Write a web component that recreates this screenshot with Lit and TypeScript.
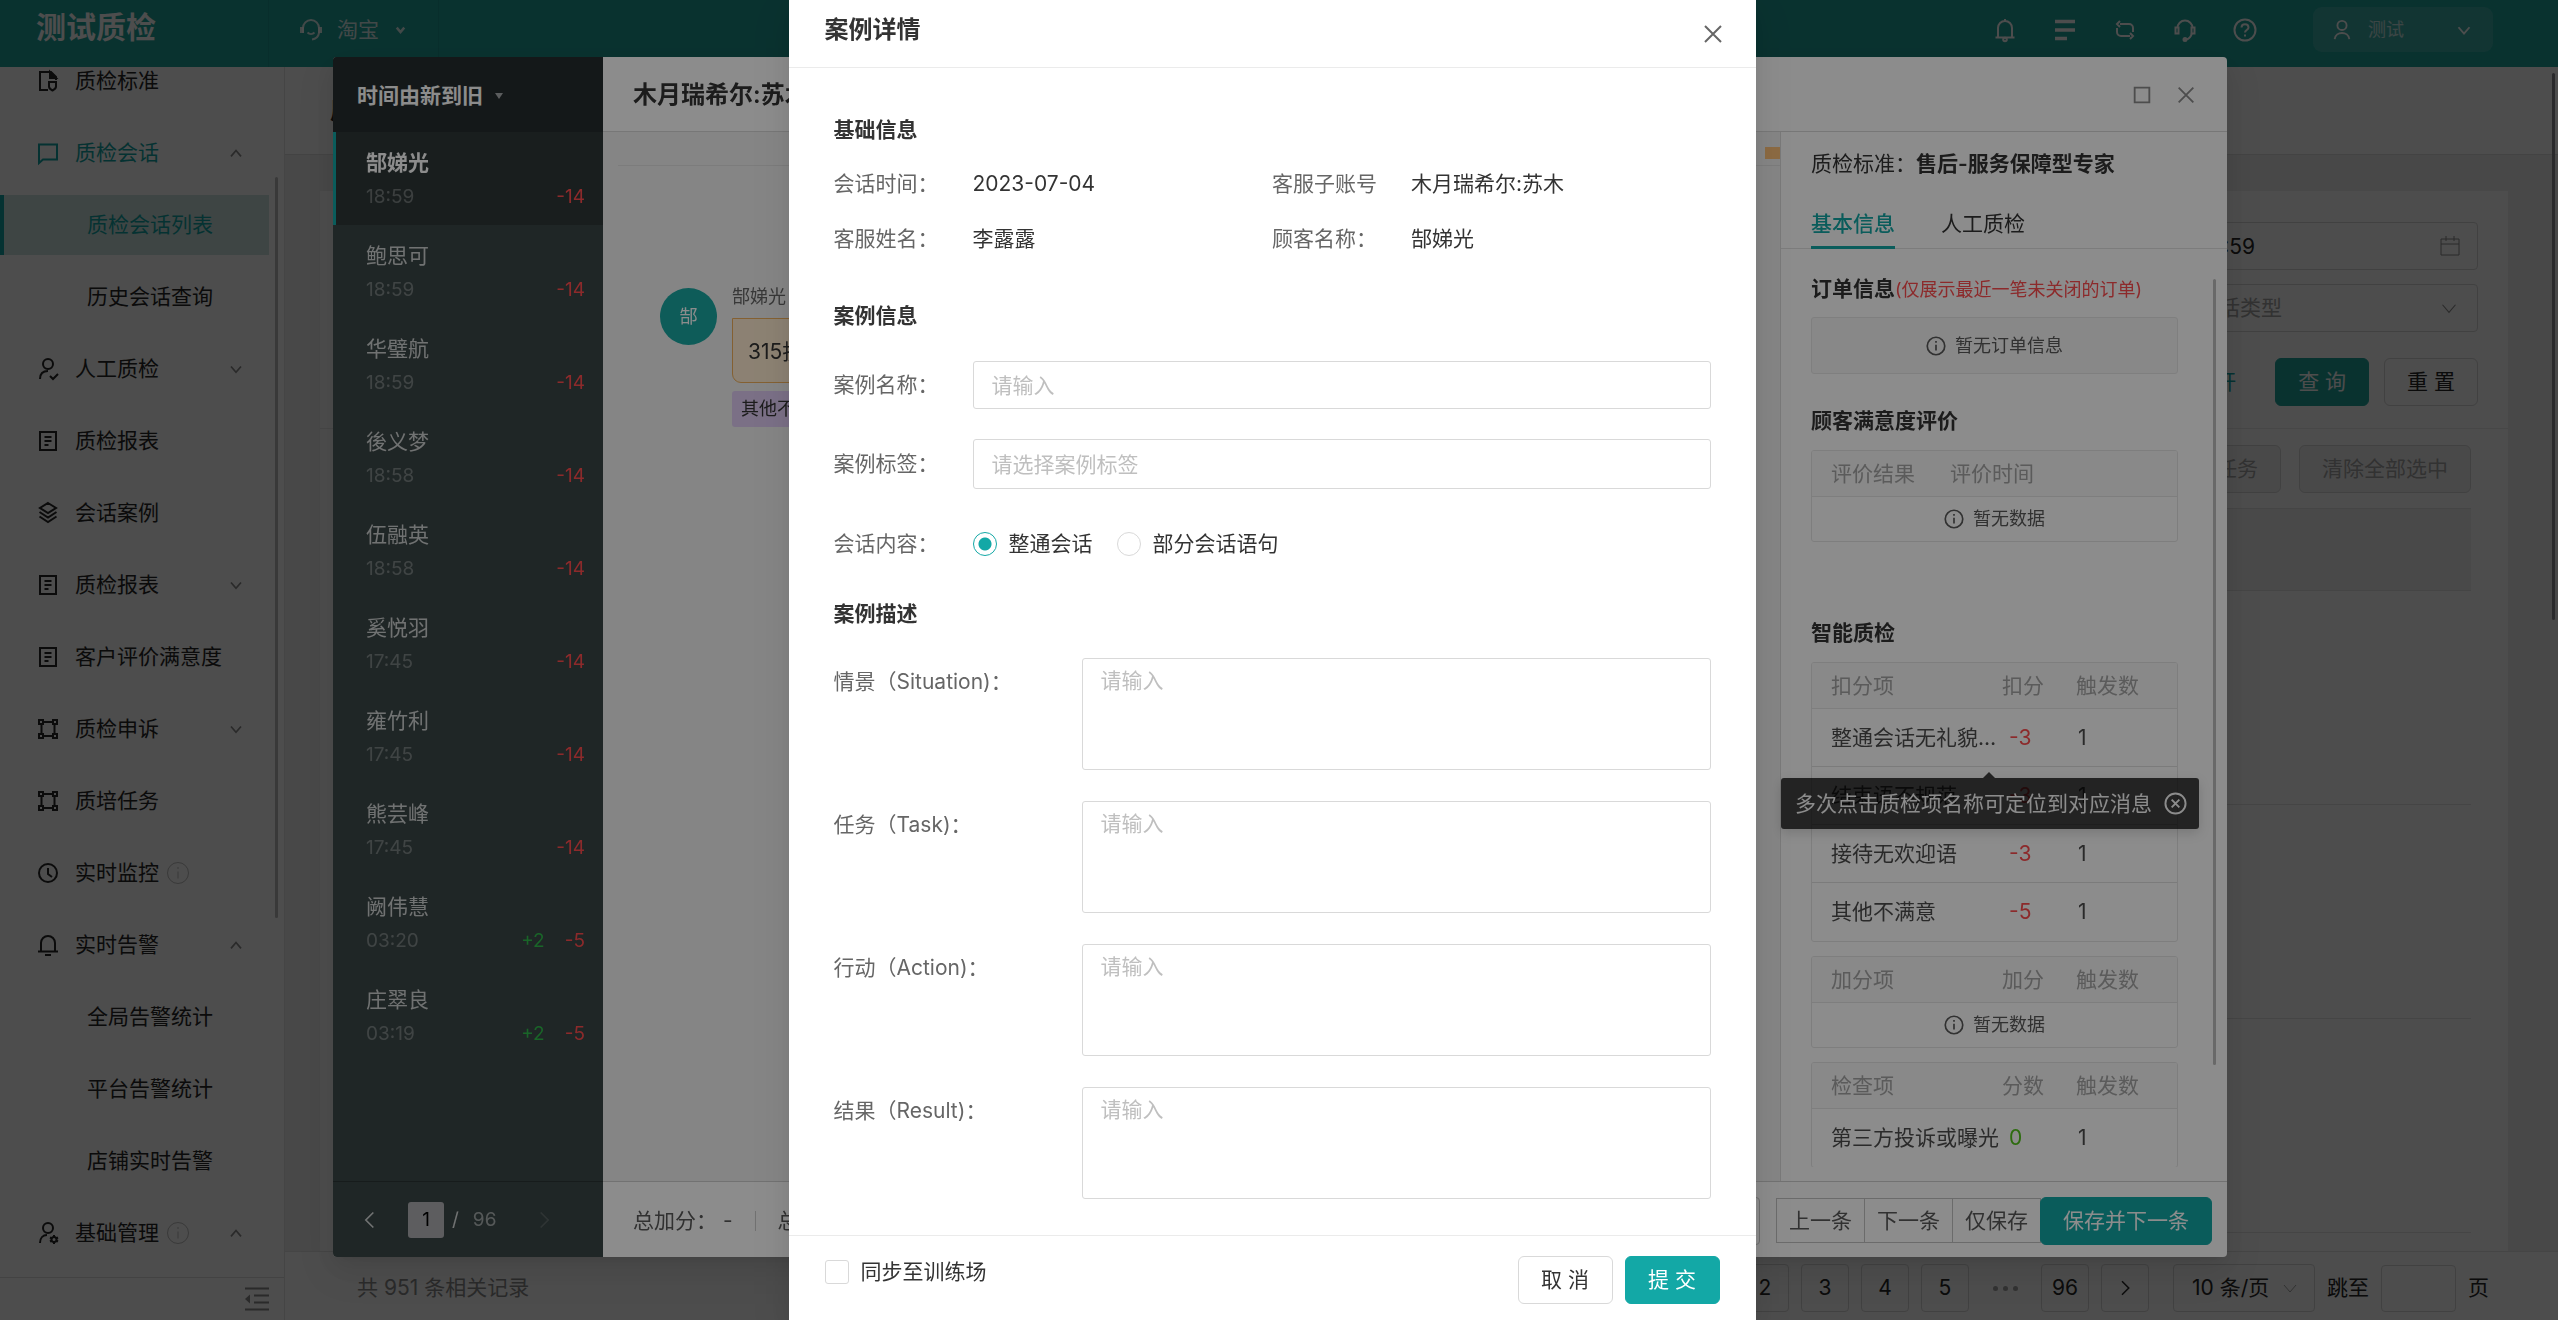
import { LitElement, html, css, svg, nothing } from "lit";
import { customElement } from "lit/decorators.js";
import { classMap } from "lit/directives/class-map.js";

const shapes: Record<string, unknown> = {
  file: svg`<path d="M20 11V8l-5-5H4v18h8"/><path d="M14 3v6h6z" fill="currentColor"/><path d="M13 13h7v4.500c0 2-1.500 3-3.500 4-2-1-3.500-2-3.500-4z"/>`,
  chat: svg`<path d="M3 3.500h18v15H7l-4 3.500z"/>`,
  userCheck: svg`<ellipse cx="12" cy="7" rx="5" ry="5"/><path d="M4 22c0-5 3-8 8-8M14 19l3 3 5-5"/>`,
  userGear: svg`<ellipse cx="12" cy="7" rx="5" ry="5"/><path d="M4 22c0-5 3-8 7-8"/><circle cx="18" cy="18.500" r="2.500"/><path d="M18 14v2M18 21v2M14 16.500l2 1M20 19.500l2 1M14 20.500l2-1M20 17.500l2-1"/>`,
  doc: svg`<path d="M4 3h16v18H4zM8.500 8h7M8.500 12h7M8.500 16h4"/>`,
  layers: svg`<path d="M12 2l8 5-8 5-8-5zM3.500 11l8.500 5.500 8.500-5.500M3.500 15.500L12 21l8.500-5.500"/>`,
  nodes: svg`<path d="M5.500 6.500v11M18.500 6.500v11M6.500 5h11M6.500 19h11"/><path d="M3 3h4v4H3zM17 3h4v4h-4zM3 17h4v4H3zM17 17h4v4h-4z"/>`,
  clock: svg`<circle cx="12" cy="12" r="9"/><path d="M12 7v6l4 3"/>`,
  bell: svg`<path d="M5 18v-8a7 7 0 0 1 14 0v8M2 18.500h20M9 22h6"/>`,
  info: svg`<circle cx="12" cy="12" r="10.500"/><path d="M12 10.500v7M12 6v2"/>`,
  up: svg`<path d="M6 16l6-7 6 7"/>`,
  down: svg`<path d="M6 9l6 7 6-7"/>`,
  left: svg`<path d="M16 3l-9 9 9 9"/>`,
  right: svg`<path d="M8 3l9 9-9 9"/>`,
  close: svg`<path d="M4 4l16 16M20 4L4 20"/>`,
  square: svg`<path d="M4 4h16v16H4z"/>`,
  fold: svg`<path d="M0 1.500h24M9 8.500h15M9 15.500h15M0 22.500h24"/><path d="M5 7.500v9L0 12z" fill="currentColor" stroke="none"/>`,
  headset: svg`<path d="M4 15V10a8 8 0 0 1 16 0v5a8 8 0 0 1-7 6.500"/><path d="M3 9v6M21 9v6" stroke-width="4"/><path d="M8.500 14.500c2 2 5 2 7 0"/>`,
  headsetThin: svg`<path d="M4.500 10a7.500 7.500 0 0 1 15 0M19 15c-1 4-3 6-6 6.500"/><path d="M2.500 9.500h3v6h-3zM18.500 9.500h3v6h-3z"/><circle cx="12" cy="21.500" r="1.500" fill="currentColor"/>`,
  bellThin: svg`<path d="M5 19V10a7 7 0 0 1 14 0v9M2.500 19.500h19M12 1v2"/><circle cx="12" cy="21.500" r="1.800"/>`,
  bars: svg`<path d="M2 3.500h20M2 12h20M2 20.500h12" stroke-width="3.500"/>`,
  loop: svg`<path d="M7 6h9a4 4 0 0 1 4 4v4M7 3L4 6l3 3M17 18H8a4 4 0 0 1-4-4v-4M17 15l3 3-3 3"/>`,
  help: svg`<circle cx="12" cy="12" r="10.500"/><path d="M8.500 9.500c0-4.500 7-4.500 7 0 0 2.500-3.500 2.500-3.500 5M12 16.500v2"/>`,
  user: svg`<circle cx="12" cy="7" r="5"/><path d="M4 22c1-9 15-9 16 0"/>`,
  calendar: svg`<path d="M3 5h18v16H3zM3 10h18M8 2v5M16 2v5"/>`,
  closeRound: svg`<circle cx="12" cy="12" r="10.500"/><path d="M8 8l8 8M16 8l-8 8"/>`,
};

const icon = (name: string, size = 24, stroke = 2) => html`<svg
  width=${size}
  height=${size}
  viewBox="0 0 24 24"
  fill="none"
  stroke="currentColor"
  stroke-width=${stroke}
  aria-hidden="true"
>
  ${shapes[name]}
</svg>`;

const base = css`
  * {
    box-sizing: border-box;
  }
  svg {
    display: block;
    flex: none;
    overflow: visible;
  }
  button,
  input,
  select,
  textarea {
    font: inherit;
    color: inherit;
    margin: 0;
  }
  button {
    display: inline-flex;
    align-items: center;
    justify-content: center;
    border: none;
    background: none;
    padding: 0;
    white-space: nowrap;
    cursor: pointer;
  }
  a {
    color: inherit;
    text-decoration: none;
  }
  h1,
  h2,
  h3,
  p,
  ul,
  dl,
  dd {
    margin: 0;
    padding: 0;
    list-style: none;
  }
`;

interface NavItem {
  label: string;
  icon?: string;
  arrow?: "up" | "down";
  hint?: boolean;
  open?: boolean;
  active?: boolean;
}

const navItems: NavItem[] = [
  { label: "质检标准", icon: "file" },
  { label: "质检会话", icon: "chat", arrow: "up", open: true },
  { label: "质检会话列表", active: true },
  { label: "历史会话查询" },
  { label: "人工质检", icon: "userCheck", arrow: "down" },
  { label: "质检报表", icon: "doc" },
  { label: "会话案例", icon: "layers" },
  { label: "质检报表", icon: "doc", arrow: "down" },
  { label: "客户评价满意度", icon: "doc" },
  { label: "质检申诉", icon: "nodes", arrow: "down" },
  { label: "质培任务", icon: "nodes" },
  { label: "实时监控", icon: "clock", hint: true },
  { label: "实时告警", icon: "bell", arrow: "up" },
  { label: "全局告警统计" },
  { label: "平台告警统计" },
  { label: "店铺实时告警" },
  { label: "基础管理", icon: "userGear", arrow: "up", hint: true },
];

@customElement("side-nav")
export class SideNav extends LitElement {
  static styles = [
    base,
    css`
      :host {
        display: flex;
        flex-direction: column;
        position: relative;
        width: 285px;
        min-height: 0;
        background: #fff;
        border-right: 1px solid #e8e8e8;
      }
      .list {
        flex: 1;
        min-height: 0;
        overflow: hidden;
      }
      .items {
        display: flex;
        flex-direction: column;
        gap: 12px;
        margin-top: -16px;
      }
      .item {
        display: flex;
        align-items: center;
        height: 60px;
        width: 269px;
        padding: 0 23px 0 36px;
        color: #262626;
      }
      .item.sub {
        padding-left: 87px;
      }
      .item.open {
        color: #13a8a6;
      }
      .item.active {
        padding-left: 83px;
        border-left: 4px solid #13a8a6;
        background: #cfe6e3;
        color: #13a8a6;
      }
      .label {
        margin-left: 15px;
      }
      .sub .label {
        margin-left: 0;
      }
      .hint {
        margin-left: 7px;
        color: #bfbfbf;
      }
      .arrow {
        margin-left: auto;
        color: #8c8c8c;
      }
      .thumb {
        position: absolute;
        right: 6px;
        top: 110px;
        width: 3px;
        height: 741px;
        border-radius: 2px;
        background: #bfbfbf;
      }
      .foot {
        display: flex;
        justify-content: flex-end;
        align-items: center;
        height: 43px;
        padding-right: 15px;
        border-top: 1px solid #e0e0e0;
        color: #8c8c8c;
      }
    `,
  ];

  render() {
    return html`
      <nav class="list">
        <ul class="items">
          ${navItems.map(
            (n) => html`<li>
              <a href="#" class=${classMap({ item: true, sub: !n.icon, open: !!n.open, active: !!n.active })}>
                ${n.icon ? icon(n.icon) : nothing}
                <span class="label">${n.label}</span>
                ${n.hint ? html`<span class="hint">${icon("info", 24, 1)}</span>` : nothing}
                ${n.arrow ? html`<span class="arrow">${icon(n.arrow, 20, 2)}</span>` : nothing}
              </a>
            </li>`
          )}
        </ul>
      </nav>
      <div class="thumb"></div>
      <div class="foot"><button aria-label="收起菜单">${icon("fold")}</button></div>
    `;
  }
}

@customElement("top-bar")
export class TopBar extends LitElement {
  static styles = [
    base,
    css`
      :host {
        display: flex;
        height: 67px;
        background: #20a79f;
        color: #fff;
      }
      .brand {
        width: 269px;
        padding-left: 36px;
        border-right: 1px solid #1d9a93;
        font-size: 30px;
        line-height: 54px;
        font-weight: 600;
      }
      .platform {
        justify-content: flex-start;
        gap: 14px;
        width: 170px;
        height: 67px;
        padding: 0 0 8px 30px;
        border-right: 1px solid #1d9a93;
        color: rgba(255, 255, 255, 0.85);
      }
      .tools {
        display: flex;
        gap: 36px;
        margin-left: auto;
        height: 60px;
        align-items: center;
      }
      .user {
        display: flex;
        align-items: center;
        width: 180px;
        height: 45px;
        margin: 7px 65px 0 56px;
        padding: 0 18px;
        border-radius: 9px;
        background: rgba(255, 255, 255, 0.14);
        font-size: 18px;
      }
      .user span {
        margin: 0 auto 0 15px;
        opacity: 0.7;
      }
    `,
  ];

  render() {
    return html`
      <h1 class="brand">测试质检</h1>
      <button class="platform">${icon("headset")}<span>淘宝</span>${icon("down", 15, 4)}</button>
      <div class="tools">
        <button aria-label="通知">${icon("bellThin")}</button>
        <button aria-label="列表">${icon("bars")}</button>
        <button aria-label="切换">${icon("loop")}</button>
        <button aria-label="客服">${icon("headsetThin")}</button>
        <button aria-label="帮助">${icon("help")}</button>
      </div>
      <button class="user">${icon("user", 22, 2)}<span>测试</span>${icon("down", 22, 2)}</button>
    `;
  }
}

@customElement("session-page")
export class SessionPage extends LitElement {
  static styles = [
    base,
    css`
      :host {
        display: flex;
        flex-direction: column;
        position: relative;
        flex: 1;
        min-width: 0;
        background: #f0f0f0;
        color: #262626;
      }
      .title {
        height: 88px;
        padding-left: 45px;
        background: #fff;
        border-bottom: 1px solid #e0e0e0;
        font-size: 24px;
        line-height: 88px;
        font-weight: 600;
      }
      .card {
        display: flex;
        flex-direction: column;
        flex: 1;
        min-height: 0;
        margin: 36px 50px 0 35px;
        background: #fff;
      }
      .filters {
        display: flex;
        flex-direction: column;
        align-items: flex-end;
        gap: 14px;
        padding: 31px 30px 22px;
        border-bottom: 1px solid #ebebeb;
      }
      .field {
        display: flex;
        align-items: center;
        position: relative;
      }
      .field svg {
        position: absolute;
        right: 16px;
        color: #8c8c8c;
      }
      .control {
        width: 400px;
        height: 48px;
        border: 1px solid #d9d9d9;
        border-radius: 4px;
        background: #fff;
        appearance: none;
      }
      .date {
        padding: 0 222px 0 18px;
        text-align: right;
      }
      .type {
        padding: 0 18px 0 56px;
        color: #a6a6a6;
      }
      .actions,
      .tools {
        display: flex;
        justify-content: flex-end;
        align-items: center;
        gap: 15px;
      }
      .actions {
        margin-top: 12px;
      }
      .more {
        margin-right: 24px;
        color: #13a8a6;
      }
      .btn {
        height: 48px;
        padding: 0 22px;
        border: 1px solid #d9d9d9;
        border-radius: 6px;
        background: #fff;
      }
      .btn.primary {
        border-color: #20a79f;
        background: #20a79f;
        color: #fff;
      }
      .btn.muted {
        background: #f5f5f5;
        color: #a6a6a6;
      }
      .tools {
        gap: 18px;
        padding: 16px 37px 15px;
      }
      .grid {
        margin: 0 37px;
      }
      .head {
        height: 83px;
        background: #f5f5f5;
        border-bottom: 1px solid #e5e5e5;
        border-top: 1px solid #e5e5e5;
      }
      .row {
        height: 214px;
        border-bottom: 1px solid #e5e5e5;
      }
      .foot {
        display: flex;
        align-items: center;
        gap: 12px;
        height: 69px;
        padding: 4px 69px 0 72px;
        border-top: 1px solid #e5e5e5;
        background: #fff;
      }
      .total {
        margin-right: auto;
        color: #8c8c8c;
      }
      .page {
        width: 48px;
        height: 48px;
        border: 1px solid #d9d9d9;
        border-radius: 4px;
      }
      .dots {
        display: flex;
        justify-content: center;
        gap: 5px;
        width: 48px;
      }
      .dots i {
        width: 5px;
        height: 5px;
        border-radius: 50%;
        background: #a6a6a6;
      }
      .size {
        position: relative;
        display: flex;
        align-items: center;
        margin-left: 12px;
      }
      .size select {
        width: 142px;
        height: 48px;
        padding: 0 18px;
        border: 1px solid #d9d9d9;
        border-radius: 4px;
        background: #fff;
        appearance: none;
      }
      .size svg {
        position: absolute;
        right: 13px;
        color: #a6a6a6;
      }
      .jump {
        display: flex;
        align-items: center;
        gap: 12px;
      }
      .jump input {
        width: 75px;
        height: 47px;
        border: 1px solid #d9d9d9;
        border-radius: 4px;
        background: #fff;
      }
      .thumb {
        position: absolute;
        right: 3px;
        top: 6px;
        width: 3px;
        height: 547px;
        border-radius: 2px;
        background: #8c8c94;
      }
    `,
  ];

  render() {
    return html`
      <h2 class="title">质检会话列表</h2>
      <section class="card">
        <form class="filters">
          <label class="field">
            <input class="control date" aria-label="会话时间" value="23:59:59" />${icon("calendar", 24, 1)}
          </label>
          <label class="field">
            <select class="control type" aria-label="会话类型">
              <option>请选择会话类型</option></select
            >${icon("down", 26, 1)}
          </label>
          <div class="actions">
            <a class="more" href="#">展开</a>
            <button type="button" class="btn primary">查 询</button>
            <button type="button" class="btn">重 置</button>
          </div>
        </form>
        <div class="tools">
          <button class="btn muted" disabled>添加至任务</button>
          <button class="btn muted" disabled>清除全部选中</button>
        </div>
        <div class="grid">
          <div class="head"></div>
          <div class="row"></div>
          <div class="row"></div>
          <div class="row"></div>
        </div>
      </section>
      <footer class="foot">
        <span class="total">共 951 条相关记录</span>
        <button class="page">2</button>
        <button class="page">3</button>
        <button class="page">4</button>
        <button class="page">5</button>
        <span class="dots"><i></i><i></i><i></i></span>
        <button class="page">96</button>
        <button class="page" aria-label="下一页">${icon("right", 18, 2)}</button>
        <span class="size">
          <select aria-label="每页条数">
            <option>10 条/页</option></select
          >${icon("down", 24, 1)}
        </span>
        <label class="jump">跳至<input /><span>页</span></label>
      </footer>
      <div class="thumb"></div>
    `;
  }
}

const sessions = [
  { name: "郜娣光", time: "18:59", minus: "-14" },
  { name: "鲍思可", time: "18:59", minus: "-14" },
  { name: "华璧航", time: "18:59", minus: "-14" },
  { name: "後义梦", time: "18:58", minus: "-14" },
  { name: "伍融英", time: "18:58", minus: "-14" },
  { name: "奚悦羽", time: "17:45", minus: "-14" },
  { name: "雍竹利", time: "17:45", minus: "-14" },
  { name: "熊芸峰", time: "17:45", minus: "-14" },
  { name: "阙伟慧", time: "03:20", plus: "+2", minus: "-5" },
  { name: "庄翠良", time: "03:19", plus: "+2", minus: "-5" },
];

interface ScoreTable {
  heads: string[];
  rows: string[][];
}

const scoreTables: ScoreTable[] = [
  {
    heads: ["扣分项", "扣分", "触发数"],
    rows: [
      ["整通会话无礼貌用语", "-3", "1"],
      ["结束语不规范", "-3", "1"],
      ["接待无欢迎语", "-3", "1"],
      ["其他不满意", "-5", "1"],
    ],
  },
  { heads: ["加分项", "加分", "触发数"], rows: [] },
  { heads: ["检查项", "分数", "触发数"], rows: [["第三方投诉或曝光", "0", "1"]] },
];

@customElement("review-dialog")
export class ReviewDialog extends LitElement {
  static styles = [
    base,
    css`
      :host {
        display: flex;
        flex: 1;
        min-width: 0;
        height: calc(100vh - 120px);
        border-radius: 4px;
        overflow: hidden;
        background: #fff;
        box-shadow: 0 4px 9px -6px rgba(0, 0, 0, 0.12), 0 9px 24px rgba(0, 0, 0, 0.08),
          0 14px 42px 12px rgba(0, 0, 0, 0.05);
        color: #333;
      }
      .side {
        display: flex;
        flex-direction: column;
        flex: none;
        width: 270px;
        background: #394545;
        color: rgba(255, 255, 255, 0.75);
      }
      .sort {
        justify-content: flex-start;
        gap: 12px;
        height: 75px;
        padding: 2px 0 0 24px;
        background: #252c2e;
        color: #fff;
        font-weight: 600;
      }
      .caret {
        border: 4px solid transparent;
        border-top: 6px solid rgba(255, 255, 255, 0.6);
        border-bottom: none;
      }
      .sessions {
        flex: 1;
        min-height: 0;
        overflow: hidden;
      }
      .session {
        display: grid;
        align-content: start;
        gap: 4px;
        height: 93px;
        padding: 16px 18px 0 30px;
        border-left: 3px solid transparent;
      }
      .session.on {
        border-left-color: #13a8a6;
        background: #2e3838;
      }
      .session.on .name {
        color: #fff;
        font-weight: 600;
      }
      .name {
        line-height: 30px;
      }
      .meta {
        display: flex;
        gap: 20px;
        font-size: 19px;
        line-height: 30px;
        color: rgba(255, 255, 255, 0.3);
      }
      .time {
        margin-right: auto;
      }
      .plus {
        color: #2fb84a;
      }
      .minus {
        color: #ff4d4f;
      }
      .pager {
        display: flex;
        align-items: center;
        height: 76px;
        padding: 0 49px 0 27px;
        border-top: 1px solid #2b3434;
        font-size: 19px;
      }
      .pager input {
        width: 36px;
        height: 36px;
        margin: 0 8px 0 28px;
        padding: 0;
        border: none;
        border-radius: 3px;
        background: #a9a9ad;
        color: #000;
        text-align: center;
      }
      .pager .count {
        margin: 0 auto 0 14px;
        color: rgba(255, 255, 255, 0.5);
      }
      .pager .off {
        opacity: 0.2;
      }
      .main {
        display: flex;
        flex-direction: column;
        flex: 1;
        min-width: 0;
      }
      .bar {
        display: flex;
        align-items: center;
        gap: 22px;
        height: 75px;
        padding: 2px 30px 0;
        border-bottom: 1px solid #d9d9d9;
      }
      .bar h2 {
        margin-right: auto;
        font-size: 24px;
        font-weight: 600;
      }
      .bar button {
        color: #8c8c8c;
      }
      .body {
        display: flex;
        flex: 1;
        min-height: 0;
      }
      .chat {
        flex: 1;
        min-width: 0;
        background: #f3f3f3;
      }
      .strip {
        display: flex;
        justify-content: flex-end;
        height: 34px;
        margin-left: 15px;
        padding-top: 15px;
        border-bottom: 1px solid #e2e2e2;
      }
      .flag {
        width: 15px;
        height: 12px;
        background: #ffc27a;
      }
      .message {
        display: flex;
        gap: 15px;
        padding: 122px 0 0 57px;
        font-size: 18px;
      }
      .avatar {
        display: flex;
        align-items: center;
        justify-content: center;
        width: 57px;
        height: 57px;
        border-radius: 50%;
        background: #1aa8a3;
        color: #fff;
      }
      .sender {
        line-height: 18px;
        color: #666;
      }
      .bubble {
        height: 65px;
        margin-top: 12px;
        padding: 0 15px;
        border: 1px solid #f0b05c;
        border-radius: 0 9px 9px 9px;
        background: #ffecd1;
        font-size: 21px;
        line-height: 65px;
        white-space: nowrap;
      }
      .tag {
        display: inline-block;
        height: 36px;
        margin-top: 8px;
        padding: 0 9px;
        border-radius: 3px;
        background: #e0ccf5;
        line-height: 36px;
        white-space: nowrap;
      }
      .panel {
        position: relative;
        display: flex;
        flex-direction: column;
        flex: none;
        width: 447px;
        border-left: 1px solid #dcdcdc;
      }
      .standard {
        height: 65px;
        padding-left: 30px;
        line-height: 63px;
      }
      .standard b {
        font-weight: 600;
      }
      .tabs {
        display: flex;
        gap: 46px;
        height: 52px;
        padding-left: 30px;
        border-bottom: 1px solid #e2e2e2;
      }
      .tab {
        height: 52px;
        padding-top: 4px;
        border-bottom: 3px solid transparent;
      }
      .tab.on {
        border-color: #13a8a6;
        color: #13a8a6;
        font-weight: 500;
      }
      .scroll {
        flex: 1;
        min-height: 0;
        margin: 0 49px 14px 30px;
        padding-top: 25px;
        overflow: hidden;
      }
      .scroll h3 {
        font-size: 21px;
        line-height: 30px;
        font-weight: 600;
        white-space: nowrap;
      }
      .note {
        font-size: 18px;
        font-weight: 400;
        color: #ff4d4f;
      }
      .empty {
        display: flex;
        align-items: center;
        justify-content: center;
        gap: 9px;
        font-size: 18px;
        color: #595959;
      }
      .order {
        height: 57px;
        margin: 12px 0 32px;
        border: 1px solid #e8e8e8;
        border-radius: 3px;
        background: #f7f7f7;
      }
      .box {
        margin-top: 15px;
        border: 1px solid #e5e5e5;
        border-radius: 3px;
        overflow: hidden;
      }
      .rating {
        margin-bottom: 76px;
      }
      .rating,
      h3 + .box {
        margin-top: 14px;
      }
      .box + .box {
        margin-top: 14px;
      }
      table {
        width: 100%;
        border-collapse: separate;
        border-spacing: 0;
        table-layout: fixed;
      }
      th {
        height: 46px;
        padding: 0;
        border-bottom: 1px solid #e5e5e5;
        background: #f9f9f9;
        color: #a6a6a6;
        font-weight: 400;
        text-align: left;
      }
      th:first-child,
      td:first-child {
        padding-left: 19px;
      }
      .c1 {
        width: 190px;
      }
      .c2 {
        width: 74px;
      }
      .r1 {
        width: 138px;
      }
      td {
        height: 58px;
        padding: 0 2px;
        border-bottom: 1px solid #e0e0e0;
        color: #4d4d4d;
        overflow: hidden;
        text-overflow: ellipsis;
        white-space: nowrap;
      }
      tr:last-child td {
        border-bottom: none;
      }
      td.score {
        padding-left: 7px;
      }
      td.none {
        height: 44px;
        padding: 0;
      }
      td.minus {
        color: #ff4d4f;
      }
      td.green {
        color: #52c41a;
      }
      .tip {
        position: absolute;
        left: 0;
        top: 646px;
        display: flex;
        align-items: center;
        gap: 12px;
        height: 51px;
        padding: 0 12px 0 14px;
        border-radius: 3px;
        background: rgba(0, 0, 0, 0.75);
        box-shadow: 0 4px 12px rgba(0, 0, 0, 0.15);
        color: #fff;
        white-space: nowrap;
      }
      .tip::before {
        content: "";
        position: absolute;
        left: 202px;
        top: -6px;
        border: 6px solid transparent;
        border-top: none;
        border-bottom-color: rgba(0, 0, 0, 0.75);
      }
      .thumb {
        position: absolute;
        right: 11px;
        top: 147px;
        width: 3px;
        height: 786px;
        border-radius: 2px;
        background: #bfbfbf;
      }
      .foot {
        display: flex;
        align-items: center;
        height: 76px;
        padding: 2px 15px 0 30px;
        border-top: 1px solid #d0d0d0;
        color: #595959;
      }
      .split {
        width: 1px;
        height: 20px;
        margin: 0 22px;
        background: #d0d0d0;
      }
      .nav {
        display: flex;
        align-items: center;
        margin-left: auto;
      }
      .nav button {
        height: 45px;
        padding: 0 12px;
        margin-right: -1px;
        border: 1px solid #c4c4c4;
      }
      .nav .prior {
        height: 48px;
        margin-right: 16px;
        border-radius: 4px;
      }
      .nav .save {
        height: 48px;
        margin: 0;
        padding: 0 22px;
        border-color: #13a8a6;
        border-radius: 6px;
        background: #13a8a6;
        color: #fff;
      }
    `,
  ];

  private empty(text: string) {
    return html`<div class="empty">${icon("info", 20, 2)}<span>${text}</span></div>`;
  }

  private scoreTable(t: ScoreTable) {
    const tone = (v: string) => (v.startsWith("-") ? "minus" : "green");
    return html`<div class="box">
      <table>
        <thead>
          <tr>
            <th class="c1">${t.heads[0]}</th>
            <th class="c2">${t.heads[1]}</th>
            <th>${t.heads[2]}</th>
          </tr>
        </thead>
        <tbody>
          ${t.rows.length
            ? t.rows.map(
                (r) => html`<tr>
                  <td>${r[0]}</td>
                  <td class="score ${tone(r[1])}">${r[1]}</td>
                  <td>${r[2]}</td>
                </tr>`
              )
            : html`<tr>
                <td class="none" colspan="3">${this.empty("暂无数据")}</td>
              </tr>`}
        </tbody>
      </table>
    </div>`;
  }

  render() {
    return html`
      <aside class="side">
        <button class="sort">时间由新到旧<i class="caret"></i></button>
        <ul class="sessions">
          ${sessions.map(
            (s, i) => html`<li class=${classMap({ session: true, on: i === 0 })}>
              <div class="name">${s.name}</div>
              <div class="meta">
                <span class="time">${s.time}</span>
                ${s.plus ? html`<span class="plus">${s.plus}</span>` : nothing}
                <span class="minus">${s.minus}</span>
              </div>
            </li>`
          )}
        </ul>
        <div class="pager">
          <button aria-label="上一页">${icon("left", 20, 2)}</button>
          <input aria-label="页码" value="1" /><span>/</span><span class="count">96</span>
          <button class="off" aria-label="下一页">${icon("right", 20, 2)}</button>
        </div>
      </aside>
      <section class="main">
        <header class="bar">
          <h2>木月瑞希尔:苏木</h2>
          <button aria-label="最大化">${icon("square", 22, 2)}</button>
          <button aria-label="关闭">${icon("close", 22, 2)}</button>
        </header>
        <div class="body">
          <div class="chat">
            <div class="strip"><i class="flag"></i></div>
            <div class="message">
              <div class="avatar">郜</div>
              <div>
                <div class="sender">郜娣光</div>
                <div class="bubble">315投诉</div>
                <div class="tag">其他不满意</div>
              </div>
            </div>
          </div>
          <div class="panel">
            <p class="standard">质检标准：<b>售后-服务保障型专家</b></p>
            <div class="tabs">
              <button class="tab on">基本信息</button>
              <button class="tab">人工质检</button>
            </div>
            <div class="scroll">
              <h3>订单信息<span class="note">(仅展示最近一笔未关闭的订单)</span></h3>
              <div class="empty order">${icon("info", 20, 2)}<span>暂无订单信息</span></div>
              <h3>顾客满意度评价</h3>
              <div class="box rating">
                <table>
                  <thead>
                    <tr>
                      <th class="r1">评价结果</th>
                      <th>评价时间</th>
                    </tr>
                  </thead>
                  <tbody>
                    <tr>
                      <td class="none" colspan="2">${this.empty("暂无数据")}</td>
                    </tr>
                  </tbody>
                </table>
              </div>
              <h3>智能质检</h3>
              ${scoreTables.map((t) => this.scoreTable(t))}
            </div>
            <div class="thumb"></div>
            <div class="tip" role="tooltip">
              <span>多次点击质检项名称可定位到对应消息</span>
              <button aria-label="关闭提示">${icon("closeRound", 23, 2)}</button>
            </div>
          </div>
        </div>
        <footer class="foot">
          <span>总加分： -</span><i class="split"></i><span>总扣分： -14</span>
          <div class="nav">
            <button class="prior">加入案例库</button>
            <button>上一条</button>
            <button>下一条</button>
            <button>仅保存</button>
            <button class="save">保存并下一条</button>
          </div>
        </footer>
      </section>
    `;
  }
}

const facts = [
  ["会话时间：", "2023-07-04"],
  ["客服子账号", "木月瑞希尔:苏木"],
  ["客服姓名：", "李露露"],
  ["顾客名称：", "郜娣光"],
];

const stories = [
  ["situation", "情景（Situation)："],
  ["task", "任务（Task)："],
  ["action", "行动（Action)："],
  ["result", "结果（Result)："],
];

@customElement("case-modal")
export class CaseModal extends LitElement {
  static styles = [
    base,
    css`
      :host {
        display: flex;
        flex-direction: column;
        width: 967px;
        max-width: 100%;
        min-height: 100%;
        background: #fff;
        box-shadow: 0 4px 9px -6px rgba(0, 0, 0, 0.12), 0 9px 24px rgba(0, 0, 0, 0.08),
          0 14px 42px 12px rgba(0, 0, 0, 0.05);
        color: #333;
      }
      .head {
        display: flex;
        justify-content: space-between;
        height: 68px;
        padding: 0 31px 0 36px;
        border-bottom: 1px solid #ebebeb;
      }
      .head h2 {
        font-size: 24px;
        line-height: 60px;
        font-weight: 600;
      }
      .head button {
        color: #666;
      }
      .body {
        display: flex;
        flex-direction: column;
        flex: 1;
        padding: 47px 45px 36px;
      }
      h3 {
        font-size: 21px;
        line-height: 30px;
        font-weight: 600;
      }
      .facts {
        display: grid;
        grid-template-columns: 1fr 1fr;
        row-gap: 25px;
        margin: 24px 0 47px;
        line-height: 30px;
      }
      .fact,
      .row {
        display: flex;
        align-items: center;
      }
      .name {
        flex: none;
        width: 139px;
        color: #666;
      }
      .row {
        margin-top: 30px;
      }
      .text {
        flex: 1;
        min-width: 0;
        height: 48px;
        padding: 0 18px;
        border: 1px solid #d9d9d9;
        border-radius: 3px;
        background: #fff;
        outline: none;
      }
      .text.tall {
        height: 50px;
      }
      .text::placeholder,
      .area::placeholder {
        color: #bfbfbf;
        opacity: 1;
      }
      .choices {
        margin: 40px 0;
        line-height: 30px;
      }
      .choice {
        display: flex;
        align-items: center;
        gap: 12px;
        margin-right: 24px;
      }
      .choice input,
      .sync input {
        appearance: none;
        width: 24px;
        height: 24px;
        border: 1px solid #d9d9d9;
        background: #fff;
      }
      .choice input {
        border-radius: 50%;
      }
      .choice input:checked {
        border-color: #13a8a6;
        background: radial-gradient(circle, #13a8a6 6px, #fff 7px);
      }
      .story {
        display: flex;
        margin-top: 29px;
      }
      .story + .story {
        margin-top: 31px;
      }
      .story .name {
        width: 248px;
        line-height: 48px;
      }
      .area {
        flex: 1;
        min-width: 0;
        height: 112px;
        padding: 6px 18px;
        border: 1px solid #d9d9d9;
        border-radius: 3px;
        line-height: 32px;
        resize: none;
        outline: none;
      }
      .foot {
        display: flex;
        align-items: flex-start;
        gap: 12px;
        height: 85px;
        padding: 20px 36px 0;
        border-top: 1px solid #ebebeb;
      }
      .sync {
        display: flex;
        align-items: center;
        gap: 12px;
        height: 32px;
        margin-right: auto;
      }
      .sync input {
        border-radius: 3px;
      }
      .btn {
        width: 95px;
        height: 48px;
        border: 1px solid #d9d9d9;
        border-radius: 6px;
      }
      .btn.primary {
        border-color: #13a8a6;
        background: #13a8a6;
        color: #fff;
      }
    `,
  ];

  render() {
    return html`
      <header class="head">
        <h2>案例详情</h2>
        <button aria-label="关闭">${icon("close", 24, 2)}</button>
      </header>
      <div class="body">
        <h3>基础信息</h3>
        <dl class="facts">
          ${facts.map(
            ([k, v]) => html`<div class="fact">
              <dt class="name">${k}</dt>
              <dd>${v}</dd>
            </div>`
          )}
        </dl>
        <h3>案例信息</h3>
        <div class="row">
          <label class="name" for="case-name">案例名称：</label>
          <input class="text" id="case-name" placeholder="请输入" />
        </div>
        <div class="row">
          <label class="name" for="case-tag">案例标签：</label>
          <input class="text tall" id="case-tag" placeholder="请选择案例标签" />
        </div>
        <div class="row choices" role="radiogroup" aria-labelledby="scope">
          <span class="name" id="scope">会话内容：</span>
          <label class="choice"><input type="radio" name="scope" checked />整通会话</label>
          <label class="choice"><input type="radio" name="scope" />部分会话语句</label>
        </div>
        <h3>案例描述</h3>
        ${stories.map(
          ([id, label]) => html`<div class="story">
            <label class="name" for=${id}>${label}</label>
            <textarea class="area" id=${id} placeholder="请输入"></textarea>
          </div>`
        )}
      </div>
      <footer class="foot">
        <label class="sync"><input type="checkbox" />同步至训练场</label>
        <button class="btn">取 消</button>
        <button class="btn primary">提 交</button>
      </footer>
    `;
  }
}

@customElement("app-root")
export class AppRoot extends LitElement {
  static styles = [
    base,
    css`
      :host {
        display: flex;
        flex-direction: column;
        height: 100vh;
        overflow: hidden;
        font-family: Inter, "Noto Sans CJK SC", sans-serif;
        font-size: 21px;
        line-height: 30px;
      }
      .shell {
        display: flex;
        flex: 1;
        min-height: 0;
      }
      .mask {
        position: fixed;
        inset: 0;
        display: flex;
        align-items: flex-start;
        padding: 57px 331px 0 333px;
        background: rgba(0, 0, 0, 0.45);
      }
      .mask.front {
        align-items: stretch;
        justify-content: center;
        padding: 0 14px 0 0;
      }
    `,
  ];

  render() {
    return html`
      <top-bar></top-bar>
      <div class="shell">
        <side-nav></side-nav>
        <session-page></session-page>
      </div>
      <div class="mask"><review-dialog></review-dialog></div>
      <div class="mask front"><case-modal></case-modal></div>
    `;
  }
}
